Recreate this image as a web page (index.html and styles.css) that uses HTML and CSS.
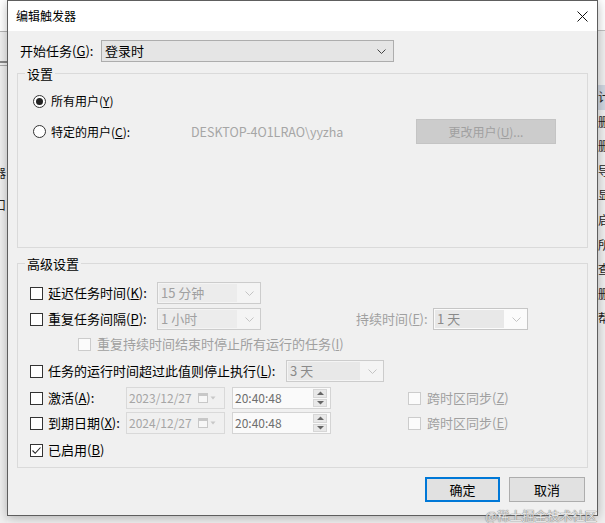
FILE: index.html
```html
<!DOCTYPE html>
<html lang="zh-CN">
<head>
<meta charset="utf-8">
<title>编辑触发器</title>
<link rel="stylesheet" href="styles.css">
</head>
<body>
<div class="desktop">
  <div class="bg-left">
    <div class="bl-top"></div>
    <div class="bl-line1"></div>
    <div class="bl-line2"></div>
    <div class="bl-chars"><span class="bl-c1">器</span><span class="bl-c2">口</span></div>
  </div>
  <div class="bg-right">
    <div class="br-top"></div>
    <div class="br-list">
      <div class="br-item sel">计</div>
      <div class="br-item">删</div>
      <div class="br-item">删</div>
      <div class="br-item">导</div>
      <div class="br-item">显</div>
      <div class="br-item">启</div>
      <div class="br-item">所</div>
      <div class="br-item">查</div>
      <div class="br-item">删</div>
      <div class="br-item">帮</div>
    </div>
  </div>

  <div class="dialog">
    <div class="titlebar">
      <span class="title">编辑触发器</span>
      <svg class="close" width="11" height="11" viewBox="0 0 11 11"><path d="M0.5 0.5L10.5 10.5M10.5 0.5L0.5 10.5" stroke="#111" stroke-width="1" fill="none"/></svg>
    </div>
    <div class="content">
      <div class="start-row">
        <span class="start-label">开始任务(<u>G</u>):</span>
        <div class="combo">
          <span class="combo-text">登录时</span>
          <svg class="chev" width="9" height="5" viewBox="0 0 9 5"><path d="M0.5 0.5L4.5 4.5L8.5 0.5" fill="none" stroke="#444"/></svg>
        </div>
      </div>

      <div class="group group-settings">
        <div class="group-title">设置</div>
        <div class="radio-row r1">
          <span class="radio checked"></span>
          <span>所有用户(<u>Y</u>)</span>
        </div>
        <div class="radio-row r2">
          <span class="radio"></span>
          <span class="user-label">特定的用户(<u>C</u>):</span>
          <span class="user-name">DESKTOP-4O1LRAO\yyzha</span>
          <span class="btn-disabled">更改用户(<u>U</u>)...</span>
        </div>
      </div>

      <div class="group group-adv">
        <div class="group-title">高级设置</div>

        <div class="arow a1">
          <span class="chk"></span>
          <span class="lbl-delay">延迟任务时间(<u>K</u>):</span>
          <div class="dcombo w104">
            <span class="dtext">15 分钟</span>
            <svg class="chev" width="9" height="5" viewBox="0 0 9 5"><path d="M0.5 0.5L4.5 4.5L8.5 0.5" fill="none" stroke="#c4c4c4"/></svg>
          </div>
        </div>

        <div class="arow a2">
          <span class="chk"></span>
          <span class="lbl-delay">重复任务间隔(<u>P</u>):</span>
          <div class="dcombo w104">
            <span class="dtext">1 小时</span>
            <svg class="chev" width="9" height="5" viewBox="0 0 9 5"><path d="M0.5 0.5L4.5 4.5L8.5 0.5" fill="none" stroke="#c4c4c4"/></svg>
          </div>
          <span class="lbl-duration gray">持续时间(<u>F</u>):</span>
          <div class="dcombo w95 light">
            <span class="dtext dark">1 天</span>
            <svg class="chev" width="9" height="5" viewBox="0 0 9 5"><path d="M0.5 0.5L4.5 4.5L8.5 0.5" fill="none" stroke="#c4c4c4"/></svg>
          </div>
        </div>

        <div class="arow a3">
          <span class="chk disabled"></span>
          <span class="gray">重复持续时间结束时停止所有运行的任务(<u>I</u>)</span>
        </div>

        <div class="arow a4">
          <span class="chk"></span>
          <span class="lbl-stop">任务的运行时间超过此值则停止执行(<u>L</u>):</span>
          <div class="dcombo w98">
            <span class="dtext dark">3 天</span>
            <svg class="chev" width="9" height="5" viewBox="0 0 9 5"><path d="M0.5 0.5L4.5 4.5L8.5 0.5" fill="none" stroke="#c4c4c4"/></svg>
          </div>
        </div>

        <div class="arow a5">
          <span class="chk"></span>
          <span class="lbl-date">激活(<u>A</u>):</span>
          <div class="date">
            <span class="date-text">2023/12/27</span>
            <svg class="cal" width="19" height="10" viewBox="0 0 19 10"><rect x="0.5" y="0.5" width="9" height="9" fill="#f7f7f7" stroke="#c8c8c8"/><rect x="1" y="1" width="8" height="2" fill="#c8c8c8"/><path d="M12.5 3.5H17.5L15 6.5Z" fill="#c8c8c8"/></svg>
          </div>
          <div class="time">
            <span class="time-text">20:40:48</span>
            <span class="spin">
              <span class="spin-btn"><svg width="7" height="4" viewBox="0 0 7 4"><path d="M0 4L3.5 0.5L7 4Z" fill="#666"/></svg></span>
              <span class="spin-btn"><svg width="7" height="4" viewBox="0 0 7 4"><path d="M0 0L3.5 3.5L7 0Z" fill="#666"/></svg></span>
            </span>
          </div>
          <span class="chk disabled tz-chk"></span>
          <span class="gray">跨时区同步(<u>Z</u>)</span>
        </div>

        <div class="arow a6">
          <span class="chk"></span>
          <span class="lbl-date">到期日期(<u>X</u>):</span>
          <div class="date">
            <span class="date-text">2024/12/27</span>
            <svg class="cal" width="19" height="10" viewBox="0 0 19 10"><rect x="0.5" y="0.5" width="9" height="9" fill="#f7f7f7" stroke="#c8c8c8"/><rect x="1" y="1" width="8" height="2" fill="#c8c8c8"/><path d="M12.5 3.5H17.5L15 6.5Z" fill="#c8c8c8"/></svg>
          </div>
          <div class="time">
            <span class="time-text">20:40:48</span>
            <span class="spin">
              <span class="spin-btn"><svg width="7" height="4" viewBox="0 0 7 4"><path d="M0 4L3.5 0.5L7 4Z" fill="#666"/></svg></span>
              <span class="spin-btn"><svg width="7" height="4" viewBox="0 0 7 4"><path d="M0 0L3.5 3.5L7 0Z" fill="#666"/></svg></span>
            </span>
          </div>
          <span class="chk disabled tz-chk"></span>
          <span class="gray">跨时区同步(<u>E</u>)</span>
        </div>

        <div class="arow a7">
          <span class="chk"><svg width="11" height="11" viewBox="0 0 11 11"><path d="M1.5 5.5L4.2 8.3L9.5 2.5" fill="none" stroke="#222" stroke-width="1.1"/></svg></span>
          <span>已启用(<u>B</u>)</span>
        </div>
      </div>

      <div class="buttons">
        <span class="btn btn-ok">确定</span>
        <span class="btn btn-cancel">取消</span>
      </div>
    </div>
  </div>

  <div class="watermark">@稀土掘金技术社区</div>
</div>
</body>
</html>
```

FILE: styles.css
```css
* { box-sizing: border-box; }

html, body {
  margin: 0;
  padding: 0;
}

body {
  width: 605px;
  height: 523px;
  overflow: hidden;
  font-family: "Noto Sans CJK SC", "Noto Sans", sans-serif;
  font-size: 13px;
  line-height: 16px;
  color: #000;
  background: #f2f2f2;
}

u { text-decoration: underline; text-underline-offset: 1px; }

.desktop {
  position: relative;
  width: 605px;
  height: 523px;
  overflow: hidden;
  background: #f2f2f2;
}

/* background windows peeking at the edges */
.bg-left {
  position: absolute;
  left: 0;
  top: 0;
  width: 7px;
  height: 523px;
  overflow: hidden;
  background: #f0f0f0;
}
.bl-top { height: 32px; background: #fff; border-bottom: 1px solid #b5b5b5; }
.bl-line1 { margin-top: 29px; height: 2px; background: #888; }
.bl-line2 { margin-top: 2px; height: 1px; background: #aaa; }
.bl-chars {
  position: absolute;
  left: -6px;
  top: 165px;
  width: 14px;
  font-size: 12px;
  display: flex;
  flex-direction: column;
  gap: 16px;
  color: #222;
}

.bg-right {
  position: absolute;
  left: 598px;
  top: 0;
  width: 7px;
  height: 523px;
  overflow: hidden;
  background: #f0f0f0;
}
.br-top { height: 31px; background: #fff; border-bottom: 1px solid #c0c0c0; }
.br-list { margin-top: 54px; display: flex; flex-direction: column; }
.br-item {
  height: 24.6px;
  line-height: 24.6px;
  font-size: 12px;
  width: 14px;
  color: #222;
}
.br-item.sel { background: #cfd6e0; }

/* dialog window */
.dialog {
  position: absolute;
  left: 7px;
  top: 0;
  width: 591px;
  height: 516px;
  border: 1px solid #5e5e5e;
  background: #f0f0f0;
  box-shadow: 0 2px 10px rgba(0, 0, 0, 0.28);
  display: flex;
  flex-direction: column;
}

.titlebar {
  height: 30px;
  flex: none;
  background: #fff;
  display: flex;
  align-items: center;
  justify-content: space-between;
  padding: 0 9px 0 8px;
  font-size: 12px;
}
.close { display: block; }

.content {
  flex: 1;
  display: flex;
  flex-direction: column;
  align-items: flex-start;
  padding: 9px 0 0 9px;
}

.start-row {
  display: flex;
  align-items: center;
  height: 22px;
  padding-left: 3px;
}
.start-label { width: 81px; }

.combo {
  width: 293px;
  height: 22px;
  border: 1px solid #adadad;
  background: #e5e5e5;
  display: flex;
  align-items: center;
  padding: 0 7px 0 3px;
}
.combo-text { flex: 1; }
.chev { display: block; flex: none; }

/* group boxes */
.group {
  width: 571px;
  border: 1px solid #dadada;
  display: flex;
  flex-direction: column;
  align-items: flex-start;
}
.group-title {
  margin: -8px 0 0 7px;
  padding: 0 2px;
  background: #f0f0f0;
  height: 16px;
}
.group-settings { margin-top: 11px; height: 175px; }
.group-adv { margin-top: 15px; height: 205px; }

.radio-row {
  display: flex;
  align-items: center;
  padding-left: 15px;
  font-size: 12px;
}
.r1 { height: 20px; margin-top: 9px; }
.r2 { height: 25px; margin-top: 8px; }

.radio {
  width: 13px;
  height: 13px;
  flex: none;
  border: 1px solid #333;
  border-radius: 50%;
  background: #fff;
  margin-right: 5px;
  display: flex;
  align-items: center;
  justify-content: center;
}
.radio.checked::after {
  content: "";
  width: 7px;
  height: 7px;
  border-radius: 50%;
  background: #222;
}

.user-label { width: 140px; }
.user-name { width: 225px; color: #a6a6a6; font-size: 12.5px; }
.btn-disabled {
  width: 140px;
  height: 25px;
  background: #cccccc;
  border: 1px solid #c4c4c4;
  color: #a0a0a0;
  display: flex;
  align-items: center;
  justify-content: center;
}

/* advanced rows */
.arow {
  display: flex;
  align-items: center;
  height: 22px;
  padding-left: 12px;
}
.a1 { margin-top: 10px; }
.a2 { margin-top: 4px; }
.a3 { margin-top: 3px; padding-left: 60px; }
.a4 { margin-top: 5px; }
.a5 { margin-top: 5px; }
.a6 { margin-top: 3px; }
.a7 { margin-top: 5px; }

.chk {
  width: 13px;
  height: 13px;
  flex: none;
  border: 1px solid #333;
  background: #fff;
  margin-right: 5px;
  display: flex;
  align-items: center;
  justify-content: center;
}
.chk svg { display: block; }
.chk.disabled { border-color: #cccccc; background: #fbfbfb; margin-right: 6px; }
.tz-chk { margin-left: 77px; }

.gray { color: #a0a0a0; }

.lbl-delay { width: 109px; }
.lbl-duration { margin-left: 95px; width: 77px; }
.lbl-stop { width: 238px; }
.lbl-date { width: 78px; }

.dcombo {
  height: 22px;
  border: 1px solid #cccccc;
  background: #f4f4f4;
  display: flex;
  align-items: center;
  padding: 1px 6px 1px 1px;
}
.dcombo.light { border-color: #c6c6c6; background: #fbfbfb; }
.w104 { width: 104px; }
.w95 { width: 95px; }
.w98 { width: 98px; }
.dtext {
  flex: 1;
  height: 18px;
  line-height: 18px;
  background: #ececec;
  color: #a0a0a0;
  padding-left: 2px;
  margin-right: 8px;
}
.dtext.dark { color: #8a8a8a; background: #e8e8e8; }

.date {
  width: 99px;
  height: 22px;
  border: 1px solid #d9d9d9;
  background: #f0f0f0;
  display: flex;
  align-items: center;
  padding: 0 7px 0 2px;
  color: #a6a6a6;
  font-size: 12px;
}
.date-text { flex: 1; }
.cal { display: block; }

.time {
  width: 99px;
  height: 22px;
  margin-left: 7px;
  border: 1px solid #d4d4d4;
  background: #fafafa;
  display: flex;
  align-items: center;
  padding: 0 2px 0 2px;
  color: #6e6e6e;
  font-size: 12px;
}
.time-text { flex: 1; }
.spin {
  width: 14px;
  height: 18px;
  display: flex;
  flex-direction: column;
  gap: 1px;
  margin-right: 1px;
}
.spin-btn {
  flex: 1;
  background: #e8e8e8;
  border: 1px solid #d6d6d6;
  display: flex;
  align-items: center;
  justify-content: center;
}
.spin-btn svg { display: block; }

/* buttons */
.buttons {
  align-self: flex-end;
  display: flex;
  gap: 9px;
  margin-top: 9px;
  margin-right: 12px;
}
.btn {
  height: 25px;
  background: #e1e1e1;
  display: flex;
  align-items: center;
  justify-content: center;
}
.btn-ok { width: 75px; border: 2px solid #0078d7; }
.btn-cancel { width: 76px; border: 1px solid #adadad; }

.watermark {
  position: absolute;
  right: 8px;
  bottom: 0;
  font-size: 12.5px;
  line-height: 15px;
  color: #e4e4e4;
  text-shadow: 0 0 1px #777, 0 0 1px #777;
  letter-spacing: 0;
}
```
